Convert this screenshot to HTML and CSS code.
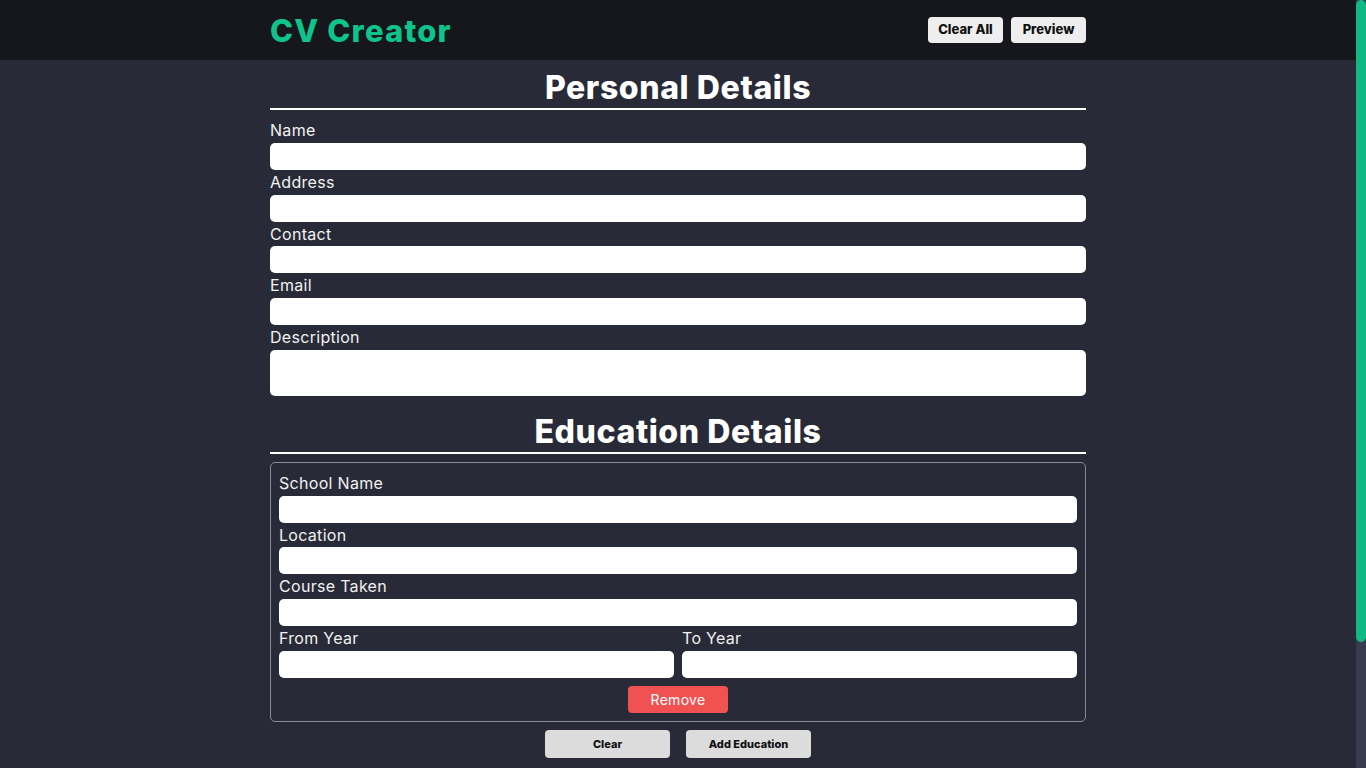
FILE: index.html
```html
<!DOCTYPE html>
<html lang="en">
<head>
<meta charset="utf-8">
<title>CV Creator</title>
<link rel="stylesheet" href="styles.css">
</head>
<body>
<div class="app">
<header class="topbar">
  <div class="topbar-inner">
    <h1 class="brand">CV Creator</h1>
    <div class="top-actions">
      <button class="btn-light">Clear All</button>
      <button class="btn-light">Preview</button>
    </div>
  </div>
</header>
<main class="page">
  <section class="section">
    <h2 class="section-title">Personal Details</h2>
    <div class="fields">
      <label class="field"><span class="label">Name</span><input class="input" type="text"></label>
      <label class="field"><span class="label">Address</span><input class="input" type="text"></label>
      <label class="field"><span class="label">Contact</span><input class="input" type="text"></label>
      <label class="field"><span class="label">Email</span><input class="input" type="text"></label>
      <label class="field"><span class="label">Description</span><textarea class="input textarea"></textarea></label>
    </div>
  </section>
  <section class="section">
    <h2 class="section-title">Education Details</h2>
    <div class="edu-box">
      <label class="field"><span class="label">School Name</span><input class="input" type="text"></label>
      <label class="field"><span class="label">Location</span><input class="input" type="text"></label>
      <label class="field"><span class="label">Course Taken</span><input class="input" type="text"></label>
      <div class="year-row">
        <label class="field"><span class="label">From Year</span><input class="input" type="text"></label>
        <label class="field"><span class="label">To Year</span><input class="input" type="text"></label>
      </div>
      <div class="remove-row"><button class="btn-remove">Remove</button></div>
    </div>
    <div class="section-actions">
      <button class="btn-grey">Clear</button>
      <button class="btn-grey">Add Education</button>
    </div>
  </section>
</main>
</div>
<div class="scrollbar"><div class="scroll-thumb"></div></div>
</body>
</html>
```
FILE: styles.css
```css
* { box-sizing: border-box; }
html { background: #282a37; }
body {
  margin: 0;
  background: #282a37;
  color: #f3f3f3;
  font-family: "Inter", "Open Sans", sans-serif;
}
.app { margin-right: 10px; }
.scrollbar {
  position: fixed;
  top: 0;
  right: 0;
  width: 10px;
  height: 100vh;
  background: #383a4d;
}
.scroll-thumb {
  height: 642px;
  background: #10b981;
  border-radius: 5px;
}
.topbar { background: #16161d; height: 60px; }
.topbar-inner {
  max-width: 816px;
  margin: 0 auto;
  height: 100%;
  display: flex;
  align-items: center;
  justify-content: space-between;
}
.brand {
  margin: 0;
  font-size: 31px;
  font-weight: 800;
  color: #0fc48a;
  letter-spacing: 1.2px;
}
.top-actions { display: flex; gap: 8px; }
.btn-light {
  height: 26px;
  width: 75px;
  border: none;
  border-radius: 4px;
  background: #eeeeee;
  color: #111;
  font-family: inherit;
  font-weight: 800;
  font-size: 13px;
  padding: 0 0 2px;
}
.page { max-width: 816px; margin: 0 auto; padding-bottom: 160px; }
.section-title {
  margin: 0;
  padding: 8px 0 0;
  height: 50px;
  text-align: center;
  font-size: 32px;
  font-weight: 800;
  line-height: 40px;
  letter-spacing: 0.6px;
  color: #ffffff;
  border-bottom: 2px solid #ffffff;
}
.fields { display: flex; flex-direction: column; padding-top: 8px; }
.field { display: flex; flex-direction: column; }
.label { font-size: 16px; line-height: 24.75px; letter-spacing: 0.3px; color: #f1f1f1; }
.input {
  display: block;
  width: 100%;
  height: 27px;
  border: none;
  border-radius: 5px;
  background: #ffffff;
  font-family: inherit;
  font-size: 14px;
  padding: 0 8px;
}
.textarea { height: 46px; resize: none; padding: 6px 8px; }
.section + .section { margin-top: 8px; }
.edu-box {
  margin-top: 8px;
  border: 1px solid #8a8b94;
  border-radius: 5px;
  padding: 8px 8px 8px;
  display: flex;
  flex-direction: column;
}
.year-row { display: grid; grid-template-columns: 1fr 1fr; gap: 8px; }
.remove-row { display: flex; justify-content: center; margin-top: 8px; }
.btn-remove {
  width: 100px;
  height: 27px;
  border: none;
  border-radius: 4px;
  background: #f05252;
  color: #ffffff;
  font-family: inherit;
  font-size: 14px;
  letter-spacing: 0.3px;
}
.section-actions { display: flex; justify-content: center; gap: 16px; margin-top: 8px; }
.btn-grey {
  width: 125px;
  height: 28px;
  border: none;
  border-radius: 4px;
  background: #dcdcdc;
  color: #111;
  font-family: inherit;
  font-weight: 800;
  font-size: 11px;
}
```
